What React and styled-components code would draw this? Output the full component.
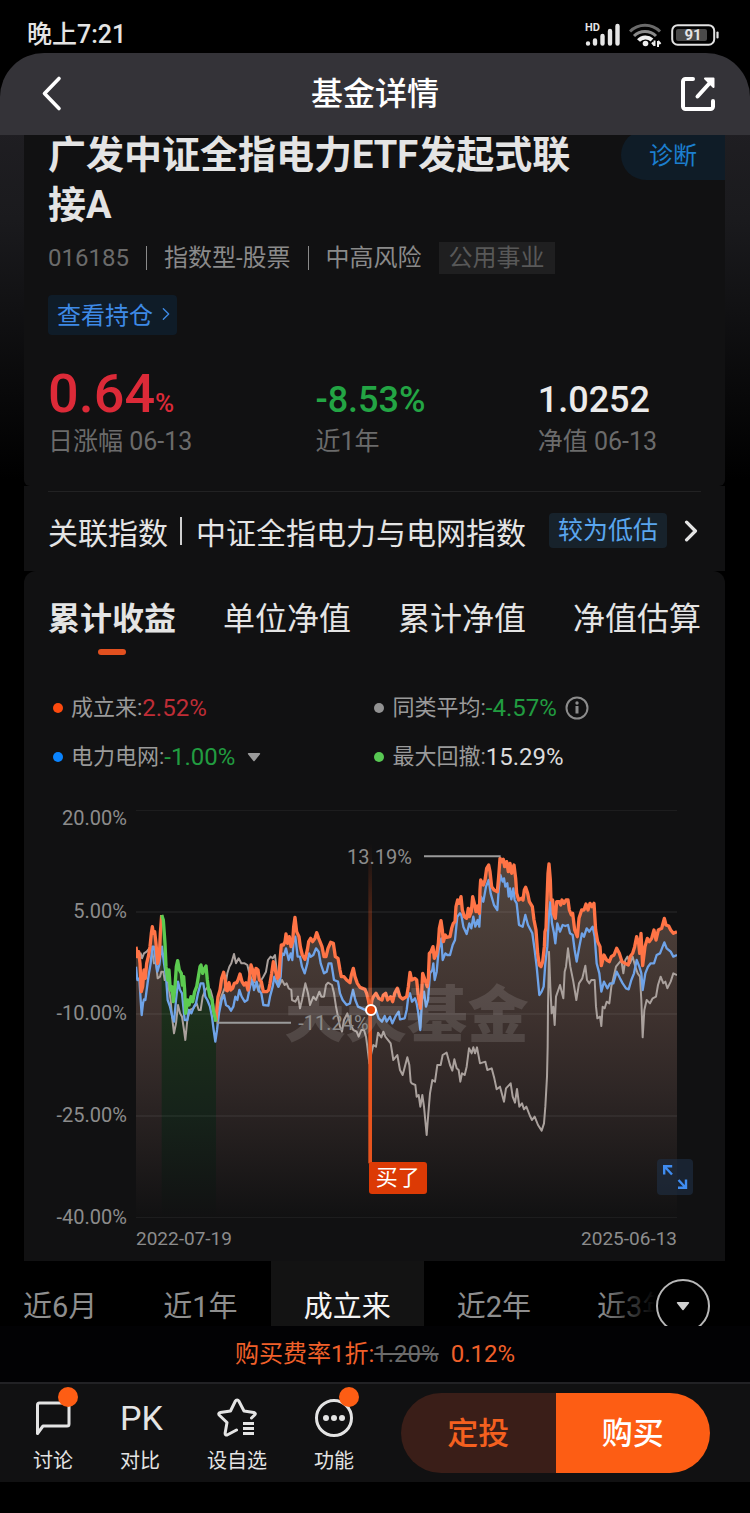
import React from "react";
import styled, { createGlobalStyle } from "styled-components";

const GlobalStyle = createGlobalStyle`
  * { box-sizing: border-box; }
  body {
    margin: 0;
    background: #000;
    color: #e4e4e4;
    font-family: Roboto, "Noto Sans CJK SC", sans-serif;
  }
  h1, h2, p, ul { margin: 0; padding: 0; font-weight: inherit; }
  ul { list-style: none; }
  a { color: inherit; text-decoration: none; }
  button {
    margin: 0;
    padding: 0;
    border: 0;
    background: none;
    color: inherit;
    font: inherit;
    cursor: pointer;
  }
  svg { display: block; }
`;

/* ---------- status bar and header ---------- */

const StatusBar = styled.div`
  display: flex;
  align-items: center;
  justify-content: space-between;
  height: 53px;
  padding: 16px 31px 0 27px;
`;

const Clock = styled.time`
  font-size: 25px;
  line-height: 36px;
  font-weight: 500;
`;

const StatusIcons = styled.div`
  display: flex;
  align-items: center;
  gap: 9px;
`;

const Signal = styled.div`
  position: relative;
`;

const SignalTag = styled.span`
  position: absolute;
  left: 0;
  top: -1px;
  font-size: 11px;
  line-height: 12px;
  font-weight: 700;
`;

const Battery = styled.div`
  position: relative;
`;

const BatteryLevel = styled.span`
  position: absolute;
  inset: 0 4px 0 0;
  font-size: 15px;
  line-height: 22px;
  font-weight: 700;
  text-align: center;
`;

const HeaderBar = styled.header`
  position: sticky;
  top: 0;
  z-index: 2;
  display: grid;
  grid-template-columns: 1fr auto 1fr;
  align-items: center;
  height: 82px;
  padding: 0 34px;
  border-radius: 44px 44px 0 0;
  background: #343338;
`;

const HeaderTitle = styled.h1`
  color: #fff;
  font-size: 32px;
  line-height: 44px;
  font-weight: 500;
`;

const HeaderButton = styled.button`
  justify-self: ${(p) => p.$side};
  color: #fff;
`;

/* ---------- fund summary ---------- */

const Content = styled.main`
  margin-top: -5px;
  padding: 0 25px 0 24px;
  background: linear-gradient(#1f1e22 0, #1a1a1d 90px, #000 350px);
`;

const Summary = styled.section`
  padding: 0 0 29px 24px;
  border-radius: 0 0 6px 6px;
  background: #111112;
`;

const TitleRow = styled.div`
  display: flex;
  align-items: flex-start;
  gap: 24px;
`;

const FundName = styled.h2`
  flex: 1;
  font-size: 38px;
  line-height: 50px;
  font-weight: 700;
`;

const DiagnoseButton = styled.button`
  flex: none;
  width: 104px;
  height: 50px;
  padding-bottom: 4px;
  border-radius: 25px 0 0 25px;
  background: #0f1c27;
  color: #1c7fcf;
  font-size: 24px;
`;

const Meta = styled.div`
  display: flex;
  align-items: center;
  height: 32px;
  margin-top: 12px;
  color: #8a8a8a;
  font-size: 24px;
  line-height: 32px;
`;

const Code = styled.span`
  color: #6b6b6b;
`;

const MetaDivider = styled.i`
  width: 1px;
  height: 24px;
  margin: 0 17px;
  background: #8a8a8a;
`;

const SectorTag = styled.span`
  margin-left: 17px;
  padding: 0 10px;
  background: #1f1f20;
  color: #585858;
`;

const HoldingsLink = styled.a`
  display: inline-flex;
  align-items: center;
  gap: 9px;
  height: 40px;
  margin-top: 21px;
  padding: 0 7px 3px 9px;
  border-radius: 4px;
  background: #0f1c28;
  color: #3e8ae6;
  font-size: 24px;
`;

const Stats = styled.div`
  display: grid;
  grid-template-columns: 267fr 222fr 187fr;
  margin-top: 31px;
`;

const StatValue = styled.p`
  color: ${(p) => p.$color};
  font-size: 54px;
  line-height: 56px;
  font-weight: 500;
  white-space: nowrap;
`;

const StatNumber = styled.span`
  font-size: ${(p) => p.$size}px;
  line-height: 1;
`;

const StatLabel = styled.p`
  margin-top: 5px;
  color: #6b6b6b;
  font-size: 25px;
  line-height: 30px;
`;

const IndexRow = styled.section`
  padding: 5px 24px 0;
  background: #111112;
`;

const IndexLink = styled.a`
  display: flex;
  align-items: center;
  height: 80px;
  padding: 0 3px 2px 0;
  border-top: 1px solid #222223;
  font-size: 30px;
`;

const IndexDivider = styled.i`
  width: 2px;
  height: 28px;
  margin: 0 14px 0 12px;
  background: #d0d0d0;
`;

const IndexName = styled.span`
  flex: 1;
`;

const Valuation = styled.span`
  margin-right: 17px;
  padding: 0 9px;
  border-radius: 4px;
  background: #17222b;
  color: #5aa6ee;
  font-size: 25px;
  line-height: 35px;
`;

/* ---------- chart card ---------- */

const ChartCard = styled.section`
  padding: 24px 0 10px;
  border-radius: 12px 12px 0 0;
  background: #111112;
`;

const Tabs = styled.div`
  display: flex;
  justify-content: space-between;
  padding: 0 24px;
`;

const Tab = styled.button`
  display: flex;
  flex-direction: column;
  align-items: center;
  gap: 6px;
  font-size: 32px;
  line-height: 48px;
  font-weight: ${(p) => (p.$active ? 700 : 400)};

  &::after {
    content: "";
    width: 28px;
    height: 6px;
    border-radius: 3px;
    background: ${(p) => (p.$active ? "#e2501f" : "transparent")};
  }
`;

const Legend = styled.ul`
  display: grid;
  grid-template-columns: 321fr 350fr;
  row-gap: 19px;
  margin-top: 38px;
  padding-left: 29px;
`;

const LegendItem = styled.li`
  display: flex;
  align-items: center;
  height: 30px;
  color: #9a9a9a;
  font-size: 22px;
  line-height: 30px;

  &::before {
    content: "";
    width: 10px;
    height: 10px;
    margin-right: 8px;
    border-radius: 50%;
    background: ${(p) => p.$dot};
  }
`;

const LegendValue = styled.span`
  color: ${(p) => p.$color};
  font-size: 24px;
`;

const LegendButton = styled.button`
  display: flex;
  align-items: center;
`;

const LegendIcon = styled.span`
  margin-left: ${(p) => p.$gap}px;
`;

const ChartArea = styled.div`
  display: flex;
  gap: 9px;
  margin-top: 34px;
  padding-right: 48px;
  color: #8c8c8c;
`;

const YAxis = styled.div`
  display: grid;
  grid-template-rows: 24px 93px repeat(3, 102px);
  align-items: end;
  width: 103px;
  font-size: 20px;
  line-height: 24px;
  text-align: right;
`;

const PlotColumn = styled.div`
  flex: 1;
  min-width: 0;
  padding-top: 4px;
`;

const Plot = styled.div`
  position: relative;
  height: 408px;
`;

const PlotDrawing = styled.svg`
  width: 100%;
  height: 100%;
`;

const Watermark = styled.span`
  position: absolute;
  left: 50%;
  top: 170px;
  transform: translateX(-50%);
  color: rgba(255, 255, 255, 0.12);
  font-size: 61px;
  line-height: 72px;
  font-weight: 900;
  white-space: nowrap;
`;

const ExtremeLabel = styled.span`
  position: absolute;
  left: ${(p) => p.$left}%;
  top: ${(p) => p.$top}px;
  font-size: 20px;
  line-height: 24px;
`;

const BuyDot = styled.span`
  position: absolute;
  left: 43%;
  top: 194px;
  width: 12px;
  height: 12px;
  margin-left: -4px;
  border: 2px solid #fff;
  border-radius: 50%;
  background: #e84308;
`;

const BuyTag = styled.span`
  position: absolute;
  left: 43%;
  top: 352px;
  padding: 0 7px;
  border-radius: 2px 3px 3px 3px;
  background: #dc3a05;
  color: #fff;
  font-size: 22px;
  line-height: 32px;
`;

const ExpandButton = styled.button`
  position: absolute;
  right: -16px;
  top: 349px;
  padding: 5px;
  border-radius: 4px;
  background: rgba(31, 48, 70, 0.6);
  color: #3f8cf0;
`;

const XAxis = styled.div`
  display: flex;
  justify-content: space-between;
  margin-top: 9px;
  font-size: 19px;
  line-height: 24px;
`;

/* ---------- range strip ---------- */

const RangeStrip = styled.div`
  position: relative;
  height: 65px;
  overflow: hidden;
`;

const RangeTabs = styled.div`
  display: flex;
  height: 88px;
  margin-left: -10px;
`;

const RangeTab = styled.button`
  flex: none;
  padding: 0 33px 2px;
  background: ${(p) => (p.$active ? "#131313" : "none")};
  color: ${(p) => (p.$active ? "#f4f4f4" : "#8e8e8e")};
  font-size: 29px;
`;

const RangeFade = styled.div`
  position: absolute;
  inset: 0 0 0 auto;
  width: 150px;
  background: linear-gradient(90deg, transparent, #000 55px);
`;

const RangeMore = styled.button`
  position: absolute;
  right: 40px;
  top: 18px;
  display: grid;
  place-items: center;
  width: 54px;
  height: 54px;
  border: 2px solid #b8b8b8;
  border-radius: 50%;
  background: #000;
  color: #d0d0d0;
`;

/* ---------- purchase footer ---------- */

const FeeLine = styled.p`
  height: 56px;
  background: #020204;
  color: #f0602a;
  font-size: 24px;
  line-height: 56px;
  text-align: center;

  del {
    margin-right: 12px;
    color: #6a6a6a;
  }
`;

const ActionBar = styled.nav`
  display: flex;
  align-items: center;
  gap: 47px;
  height: 100px;
  padding: 0 40px 0 33px;
  border-top: 2px solid #222225;
  background: #111112;
`;

const Action = styled.button`
  position: relative;
  display: flex;
  flex-direction: column;
  align-items: center;
  gap: 8px;
  padding-top: 8px;
  font-size: 20px;
  line-height: 30px;
  white-space: nowrap;
`;

const ActionIcon = styled.span`
  display: grid;
  place-items: center;
  width: 40px;
  height: 40px;
  font-size: 34px;
  line-height: 40px;
`;

const Unread = styled.i`
  position: absolute;
  right: -5px;
  top: -3px;
  width: 20px;
  height: 20px;
  border-radius: 50%;
  background: #fd5d14;
`;

const TradeButtons = styled.div`
  display: flex;
  flex: 1;
  height: 80px;
  border-radius: 40px;
  overflow: hidden;
`;

const TradeButton = styled.button`
  flex: 1;
  padding-bottom: 5px;
  background: ${(p) => (p.$primary ? "#fd5d14" : "#3a1e18")};
  color: ${(p) => (p.$primary ? "#fff" : "#f4601f")};
  font-size: 31px;
  font-weight: 500;
`;

const HomeArea = styled.div`
  height: 31px;
`;

/* ---------- chart data ---------- */

const toPairs = (text) => text.trim().split(/\s+/).map((pair) => pair.split(",").map(Number));
const shift = (text, dx, dy) => toPairs(text).map(([x, y]) => [x + dx, y + dy]);
const toPoints = (pairs) => pairs.map((pair) => pair.join(",")).join(" ");

const HALF = 840;

const fundStart = toPairs(`48,440 52,470 56,455 60,490 64,575 68,560 72,510 76,535 80,490 86,465 90,440
  94,400 97,380 100,400 104,395 108,430 113,490 118,470 121,400 125,345`);

const drawdown = toPairs(`125,345 130,360 135,430 138,500 143,540 147,510 151,570 156,560 160,605 165,560
  169,500 173,482 178,510 184,520 187,555 191,530 194,570 197,640 203,600 207,615 213,590 218,605 224,575
  230,560 235,530 240,500 243,495 248,520 254,505 258,498 262,540 266,570 270,590 276,600 280,630 288,665`);

const fundRest = [
  ...toPairs(`288,665 291,620 294,590 300,570 305,535 311,517 316,540 318,570 322,572 327,548 332,570
    338,565 343,550 350,548 354,540 360,522 366,545 372,555 378,548 384,570 390,520 393,495 398,510 403,540
    408,505 414,510 418,540 424,545 430,575 440,575 446,570 450,550 455,520 460,485 466,510 472,535 477,530
    480,480 484,435 490,435 495,425 498,402 503,430 508,410 513,440 518,425 521,380 525,352 530,395 537,410
    541,440 547,465 555,478 562,450 566,425 572,415 578,425 585,415 590,398 596,415 600,425 606,440 612,470
    618,470 624,445 632,427 640,430 646,470 654,475 660,510 664,530 672,530 680,540 690,548 694,525 700,505
    705,530 712,550 720,562 735,568 740,580 745,600 751,630 756,600 760,590 768,580 776,595 786,600 790,585
    797,580 803,600 812,590 818,605 824,580 832,565`),
  ...shift(`0,590 8,597 20,590 25,560 30,517 35,540 45,535 50,540 55,590 61,625 65,580 68,520 75,540 82,560
    85,535 88,460 93,455 99,440 103,475 110,460 115,430 118,385 123,362 127,390 130,425 136,405 140,412
    150,410 155,385 160,370 165,365 168,320 173,300 177,310 183,290 187,330 193,350 200,355 205,325 208,350
    214,335 218,290 223,310 228,335 233,318 238,340 240,270 242,240 250,255 255,240 260,205 266,195 270,215
    275,260 282,270 292,275 296,230 300,175 305,185 310,178 314,200 320,185 325,215 330,190 335,220 342,195
    347,235 350,280 356,300 364,295 369,300 373,270 377,262 383,280 388,305 397,320 402,360 408,390 413,460
    418,495 423,500 428,485 433,440 435,395 438,385 441,300 444,220 447,192 451,240 453,300 458,300 460,340
    466,355 470,305 478,305 482,315 486,300 492,310 498,300 504,300 508,330 514,345 518,340 524,390 532,410
    537,355 545,330 552,330 558,312 564,330 570,310 576,320 582,310 587,390 593,425 600,440 604,497 612,465
    620,480 628,485 634,470 642,465 650,445 658,460 666,485 675,490 685,495 690,470 698,460 704,440 710,410
    716,430 719,460 723,400 728,497 735,440 742,415 748,425 755,415 762,390 768,420 775,390 785,385 793,355
    798,375 806,378 812,390 820,400 831,395`, HALF, 0),
];

const sectorIndex = [
  ...toPairs(`48,500 52,540 58,535 62,600 65,645 69,610 72,598 76,600 80,570 86,525 92,490 97,440 102,440
    107,480 112,515 118,495 122,460 126,440 132,490 138,530 143,600 150,620 157,650 162,665 168,600 174,545
    180,570 186,580 190,620 194,660 202,660 206,630 214,640 222,620 228,610 234,580 242,550 250,550 256,590
    262,600 270,620 276,650 281,690 286,725 291,690 297,640 305,600 312,585 318,615 326,620 333,632 340,620
    346,590 352,600 358,570 365,590 374,605 382,600 390,560 397,540 402,570 410,545 416,570 424,580 430,615
    445,617 450,590 458,560 463,530 468,545 475,560 482,530 486,460 492,465 498,445 506,480 512,460 517,480
    521,420 526,410 533,470 540,470 546,500 554,520 562,490 567,460 572,470 580,465 588,445 596,455 602,490
    612,520 620,515 626,490 634,490 642,540 654,545 660,580 668,600 680,615 690,610 694,590 699,570 706,600
    714,620 726,625 740,632 750,632 758,640 768,630 776,655 786,665 794,648 800,665 810,650 817,670 826,650
    836,635`),
  ...shift(`0,658 14,655 20,630 25,590 30,580 36,605 45,595 50,610 55,640 61,690 66,600 72,575 78,620 84,600
    90,520 97,510 100,490 104,540 110,515 116,450 124,415 128,480 136,460 142,465 150,465 158,435 165,420
    172,350 180,340 184,345 190,380 200,402 208,370 214,385 220,350 226,380 233,360 238,380 243,290 250,305
    258,260 266,240 272,280 282,315 292,330 296,270 301,225 308,245 312,235 316,260 322,250 326,290 330,265
    334,298 340,265 344,300 350,310 357,375 368,380 376,345 384,375 397,400 404,450 410,500 418,585 425,575
    431,560 436,490 442,440 447,340 451,305 456,370 462,400 466,430 472,370 480,395 488,375 496,378 504,375
    510,400 518,405 524,450 530,485 538,440 546,400 552,410 560,385 568,395 578,380 584,410 590,490 598,520
    604,575 612,545 622,565 630,550 640,550 650,515 660,535 668,550 678,565 686,568 694,540 702,520 710,480
    718,500 724,520 728,570 736,520 744,500 752,490 762,490 770,465 780,460 793,427 800,445 812,455 820,470
    831,465`, HALF, 0),
];

const peerAverage = [
  ...toPairs(`48,450 56,470 62,460 66,475 72,460 80,455 88,445 96,450 102,490 108,490 113,535 120,530
    124,515 130,515 134,540 142,530 147,570 152,600 156,650 162,700 168,670 174,615 180,640 186,650 192,690
    196,720 202,660 210,630 220,625 230,610 236,630 242,630 248,590 256,570 264,560 272,572 277,590 281,625
    286,660 290,640 297,620 304,590 310,575 316,560 322,520 328,500 334,490 342,462 348,490 356,475 364,490
    374,490 382,495 388,520 396,540 408,550 416,575 424,540 430,530 438,515 444,480 452,470 458,475 465,465
    470,510 476,560 486,540 494,555 500,550 506,565 514,570 516,600 526,605 534,590 540,625 546,600 556,550
    564,580 570,615 580,590 588,600 598,575 604,590 612,590 618,555 624,548 636,555 642,580 648,620 654,650
    660,680 666,695 672,660 682,640 690,670 700,690 710,695 716,710 724,690 732,690 738,710 742,740 748,790
    754,760 760,735 768,740 774,698 784,712 790,695 796,710 812,730 820,780 832,765 840,810 848,825 852,810
    862,772 868,795 872,845`),
  ...shift(`35,220 46,225 50,260 56,255 61,290 67,255 72,290 80,375 85,310 90,250 97,210 105,215 112,165
    122,165 128,135 140,128 150,165 157,182 163,148 170,175 176,180 181,215 186,190 194,195 200,170 207,115
    215,130 220,112 225,130 231,112 240,160 256,155 262,180 275,175 283,205 290,238 300,230 312,275 318,235
    332,220 338,260 345,278 351,237 358,290 366,280 372,298 379,290 390,318 396,330 404,320 414,345 425,362
    432,340 436,290 441,200 443,110`, HALF, 630),
  ...shift(`444,620 447,455 451,560 455,640 460,620 464,675 468,590 480,555 490,595 494,515 498,500 504,445
    511,500 520,545 529,600 537,550 547,535 556,497 561,540 568,550 574,540 584,540 588,620 592,655 600,650
    604,678 608,620 614,625 620,605 628,610 634,560 640,535 648,500 656,490 664,480 670,520 676,480 682,470
    690,490 698,470 706,500 713,520 720,530 724,600 728,712 733,630 740,600 750,610 758,595 768,590 774,555
    782,530 790,550 796,545 802,565 812,545 820,520 831,525`, HALF, 0),
];

const closeArea = (pairs) =>
  toPoints([...pairs, [pairs[pairs.length - 1][0], 1254], [pairs[0][0], 1254]]);

/* ---------- icons ---------- */

const ChevronDown = ({ width = 14 }) => (
  <svg width={width} height="10" viewBox="0 0 14 10" fill="currentColor" aria-hidden="true">
    <path d="M1.5 1h11a.7.7 0 0 1 .5 1.2L7.6 9a.8.8 0 0 1-1.2 0L1 2.200A.7.7 0 0 1 1.500 1z" />
  </svg>
);

const SignalIcon = () => (
  <svg width="35" height="23" viewBox="0 0 35 23" stroke="#e6e6e6" strokeWidth="4.400" strokeLinecap="round">
    <path d="M3 20.500V20.600M10 17.500V20.600M17.500 13V20.600M25 8V20.600M32.500 3V20.600" />
  </svg>
);

const WifiIcon = () => (
  <svg width="33" height="24" viewBox="0 0 33 24" fill="none" strokeWidth="3">
    <path d="M1 8.500a21 21 0 0 1 30 0" stroke="#6a6a6a" />
    <path d="M5 13a15.500 15.500 0 0 1 22 0" stroke="#8a8a8a" />
    <path d="M9.500 17.500a9.500 9.500 0 0 1 13.500-.5" stroke="#eee" strokeWidth="4" />
    <circle cx="16.500" cy="20.500" r="2.800" fill="#eee" />
    <path d="M25.500 17.500v5.500M25.500 22.500l-2.500-3M29 24v-6M29 18l2.500 3" stroke="#eee" strokeWidth="2" />
  </svg>
);

const BatteryIcon = () => (
  <svg width="48" height="22" viewBox="0 0 48 22" fill="none">
    <rect x="1.200" y="1.200" width="42" height="19.500" rx="5.500" stroke="#e2e2e2" strokeWidth="2" />
    <rect x="5" y="5" width="31" height="12" rx="2" fill="#4a4a4a" />
    <path d="M46.500 8.500v5" stroke="#e2e2e2" strokeWidth="2.200" strokeLinecap="round" />
  </svg>
);

const BackIcon = () => (
  <svg width="36" height="40" viewBox="0 0 36 40" fill="none" stroke="currentColor" strokeWidth="3.600" strokeLinecap="round" strokeLinejoin="round">
    <path d="M25 4.500 10.500 19.500 25 34.500" />
  </svg>
);

const ShareIcon = () => (
  <svg width="36" height="36" viewBox="0 0 36 36" fill="none" stroke="currentColor" strokeWidth="4" strokeLinecap="round" strokeLinejoin="round">
    <path d="M13 3H5.500A2.500 2.500 0 0 0 3 5.500v25A2.500 2.500 0 0 0 5.500 33h25a2.500 2.500 0 0 0 2.500-2.500V25" />
    <path d="M17.500 20.500 32 4.500" />
    <path d="M25 2.500h8.500V11Z" fill="currentColor" strokeWidth="2" />
  </svg>
);

const SlimChevron = ({ width, height, stroke }) => (
  <svg width={width} height={height} viewBox="0 0 12 20" fill="none" stroke="currentColor" strokeWidth={stroke} strokeLinecap="round" strokeLinejoin="round">
    <path d="M2 2l8 8-8 8" />
  </svg>
);

const InfoIcon = () => (
  <svg width="24" height="24" viewBox="0 0 24 24" fill="none" stroke="#8c8c8c" strokeWidth="2">
    <circle cx="12" cy="12" r="10.500" />
    <path d="M12 10v7.500" strokeWidth="3" />
    <circle cx="12" cy="7" r="1.700" fill="#8c8c8c" stroke="none" />
  </svg>
);

const ExpandIcon = () => (
  <svg width="26" height="26" viewBox="0 0 26 26" fill="none" stroke="currentColor" strokeWidth="2.400">
    <path d="M2.200 10.500V2.200h8M2.500 2.500l7.500 8M24 15.500V23.800h-8M23.500 23.500 16.500 16" />
  </svg>
);

const CommentIcon = () => (
  <svg width="40" height="40" viewBox="0 0 40 40" fill="none" stroke="currentColor" strokeWidth="3" strokeLinejoin="round">
    <path d="M4.500 35.500V7a2 2 0 0 1 2-2h27.500a2 2 0 0 1 2 2v19a2 2 0 0 1-2 2H10z" />
  </svg>
);

const StarListIcon = () => (
  <svg width="40" height="40" viewBox="0 0 40 40" fill="none" stroke="currentColor" strokeWidth="3" strokeLinecap="round" strokeLinejoin="round">
    <path d="M34.500 20 37.600 17c1.200-1.100.8-2.400-.8-2.600L27 13 21.800 3c-.8-1.500-2.600-1.500-3.400 0L13.500 13 3.300 14.500c-1.600.2-2 1.600-.9 2.700L10 24.500 8.200 34.800c-.3 1.800.9 2.700 2.400 1.900L19.500 32" />
    <path d="M26 25.500h11M26 30.500h11M26 35.500h11" strokeLinecap="butt" strokeWidth="2.800" />
  </svg>
);

const MoreIcon = () => (
  <svg width="40" height="40" viewBox="0 0 40 40" fill="currentColor">
    <circle cx="20" cy="20" r="17.500" fill="none" stroke="currentColor" strokeWidth="3" />
    <circle cx="12" cy="20" r="3" />
    <circle cx="20" cy="20" r="3" />
    <circle cx="28" cy="20" r="3" />
  </svg>
);

/* ---------- page ---------- */

const gridLines = [30, 336, 642, 948, 1254];

const PerformancePlot = () => (
  <PlotDrawing viewBox="48 30 1623 1224" preserveAspectRatio="none" role="img" aria-label="累计收益走势">
    <defs>
      <linearGradient id="fundFill" gradientUnits="userSpaceOnUse" x1="0" y1="170" x2="0" y2="1254">
        <stop offset="0" stopColor="#54473f" />
        <stop offset="0.450" stopColor="#3d312e" />
        <stop offset="0.650" stopColor="#2e2625" />
        <stop offset="1" stopColor="#111112" />
      </linearGradient>
      <linearGradient id="drawdownFill" gradientUnits="userSpaceOnUse" x1="0" y1="345" x2="0" y2="1254">
        <stop offset="0" stopColor="#234020" />
        <stop offset="0.400" stopColor="#1a2c1a" />
        <stop offset="0.650" stopColor="#16231a" />
        <stop offset="1" stopColor="#111112" />
      </linearGradient>
      <linearGradient id="buyLine" gradientUnits="userSpaceOnUse" x1="0" y1="130" x2="0" y2="680">
        <stop offset="0" stopColor="#e8541e" stopOpacity="0" />
        <stop offset="0.800" stopColor="#e8541e" stopOpacity="0.600" />
        <stop offset="1" stopColor="#e8541e" />
      </linearGradient>
    </defs>
    <polygon points={closeArea([...fundStart, ...drawdown, ...fundRest])} fill="url(#fundFill)" />
    <polygon points={closeArea(drawdown)} fill="url(#drawdownFill)" />
    {gridLines.map((y) => (
      <path key={y} d={`M48 ${y}H1671`} stroke="#fff" strokeOpacity="0.100" strokeWidth="3" />
    ))}
    <g fill="none" strokeLinejoin="round">
      <polyline points={toPoints(peerAverage)} stroke="#aaa19d" strokeWidth="6" />
      <polyline points={toPoints(sectorIndex)} stroke="#6fa3e8" strokeWidth="7" />
      <polyline points={toPoints(fundStart)} stroke="#ff7446" strokeWidth="10" />
      <polyline points={toPoints(fundRest)} stroke="#ff7446" strokeWidth="10" />
      <polyline points={toPoints(drawdown)} stroke="#5ccb50" strokeWidth="10" />
      <path d="M912 169H1142M290 668H513" stroke="#9a9a9a" strokeWidth="6" />
    </g>
    <rect x="745" y="120" width="11" height="970" fill="url(#buyLine)" />
  </PlotDrawing>
);

const App = () => (
  <>
    <GlobalStyle />
    <StatusBar>
      <Clock>晚上7:21</Clock>
      <StatusIcons>
        <Signal>
          <SignalTag>HD</SignalTag>
          <SignalIcon />
        </Signal>
        <WifiIcon />
        <Battery>
          <BatteryIcon />
          <BatteryLevel>91</BatteryLevel>
        </Battery>
      </StatusIcons>
    </StatusBar>

    <HeaderBar>
      <HeaderButton $side="start" aria-label="返回"><BackIcon /></HeaderButton>
      <HeaderTitle>基金详情</HeaderTitle>
      <HeaderButton $side="end" aria-label="分享"><ShareIcon /></HeaderButton>
    </HeaderBar>

    <Content>
      <Summary>
        <TitleRow>
          <FundName>广发中证全指电力ETF发起式联接A</FundName>
          <DiagnoseButton>诊断</DiagnoseButton>
        </TitleRow>
        <Meta>
          <Code>016185</Code>
          <MetaDivider />
          <span>指数型-股票</span>
          <MetaDivider />
          <span>中高风险</span>
          <SectorTag>公用事业</SectorTag>
        </Meta>
        <HoldingsLink href="#holdings">
          查看持仓
          <SlimChevron width="8" height="14" stroke="2" />
        </HoldingsLink>
        <Stats>
          <div>
            <StatValue $color="#dc2a38">
              0.64<StatNumber $size={26}>%</StatNumber>
            </StatValue>
            <StatLabel>日涨幅 06-13</StatLabel>
          </div>
          <div>
            <StatValue $color="#23a544"><StatNumber $size={36}>-8.53%</StatNumber></StatValue>
            <StatLabel>近1年</StatLabel>
          </div>
          <div>
            <StatValue $color="#ebebeb"><StatNumber $size={36}>1.0252</StatNumber></StatValue>
            <StatLabel>净值 06-13</StatLabel>
          </div>
        </Stats>
      </Summary>

      <IndexRow>
        <IndexLink href="#index">
          <span>关联指数</span>
          <IndexDivider />
          <IndexName>中证全指电力与电网指数</IndexName>
          <Valuation>较为低估</Valuation>
          <SlimChevron width="14" height="22" stroke="3" />
        </IndexLink>
      </IndexRow>

      <ChartCard>
        <Tabs>
          <Tab $active>累计收益</Tab>
          <Tab>单位净值</Tab>
          <Tab>累计净值</Tab>
          <Tab>净值估算</Tab>
        </Tabs>

        <Legend>
          <LegendItem $dot="#fd4a0e">
            成立来:<LegendValue $color="#bf2d36">2.52%</LegendValue>
          </LegendItem>
          <LegendItem $dot="#929292">
            同类平均:<LegendValue $color="#219c40">-4.57%</LegendValue>
            <LegendButton aria-label="说明"><LegendIcon $gap={8}><InfoIcon /></LegendIcon></LegendButton>
          </LegendItem>
          <LegendItem $dot="#0a84ff">
            <LegendButton>
              电力电网:<LegendValue $color="#219c40">-1.00%</LegendValue>
              <LegendIcon $gap={12}><ChevronDown /></LegendIcon>
            </LegendButton>
          </LegendItem>
          <LegendItem $dot="#58c853">
            最大回撤:<LegendValue $color="#dcdcdc">15.29%</LegendValue>
          </LegendItem>
        </Legend>

        <ChartArea>
          <YAxis>
            <span>20.00%</span>
            <span>5.00%</span>
            <span>-10.00%</span>
            <span>-25.00%</span>
            <span>-40.00%</span>
          </YAxis>
          <PlotColumn>
            <Plot>
              <PerformancePlot />
              <Watermark>天天基金</Watermark>
              <ExtremeLabel $left={39} $top={35}>13.19%</ExtremeLabel>
              <ExtremeLabel $left={30} $top={201}>-11.24%</ExtremeLabel>
              <BuyTag>买了</BuyTag>
              <BuyDot />
              <ExpandButton aria-label="全屏"><ExpandIcon /></ExpandButton>
            </Plot>
            <XAxis>
              <span>2022-07-19</span>
              <span>2025-06-13</span>
            </XAxis>
          </PlotColumn>
        </ChartArea>
      </ChartCard>
    </Content>

    <RangeStrip>
      <RangeTabs>
        <RangeTab>近6月</RangeTab>
        <RangeTab>近1年</RangeTab>
        <RangeTab $active>成立来</RangeTab>
        <RangeTab>近2年</RangeTab>
        <RangeTab>近3年</RangeTab>
      </RangeTabs>
      <RangeFade />
      <RangeMore aria-label="更多区间"><ChevronDown /></RangeMore>
    </RangeStrip>

    <FeeLine>购买费率1折:<del>1.20%</del>0.12%</FeeLine>
    <ActionBar>
      <Action><ActionIcon><CommentIcon /></ActionIcon>讨论<Unread /></Action>
      <Action><ActionIcon>PK</ActionIcon>对比</Action>
      <Action><ActionIcon><StarListIcon /></ActionIcon>设自选</Action>
      <Action><ActionIcon><MoreIcon /></ActionIcon>功能<Unread /></Action>
      <TradeButtons>
        <TradeButton>定投</TradeButton>
        <TradeButton $primary>购买</TradeButton>
      </TradeButtons>
    </ActionBar>
    <HomeArea />
  </>
);

export default App;
